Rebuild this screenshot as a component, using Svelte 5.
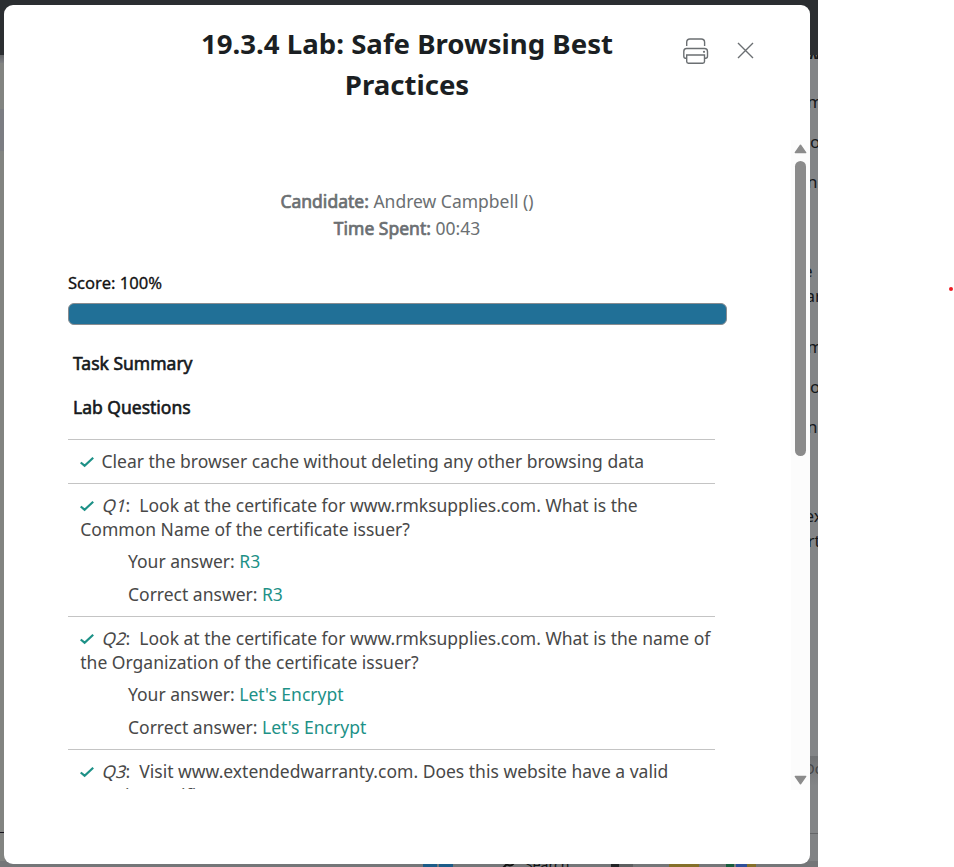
<script>
  // Clipped text of the page behind the dialog: row height and glyphs per row.
  const behind = [
    { h: 4, t: 'w.', x: -4, low: true },
    { h: 30, t: '', x: 0 },
    { h: 28, t: 'm', x: -3 },
    { h: 12, t: '', x: 0 },
    { h: 28, t: 'o', x: 0 },
    { h: 12, t: '', x: 0 },
    { h: 28, t: 'n', x: -3 },
    { h: 61, t: '', x: 0 },
    { h: 25, t: 'e', x: -7 },
    { h: 25, t: 'ar', x: -4.5 },
    { h: 26, t: '', x: 0 },
    { h: 28, t: 'm', x: -3 },
    { h: 12, t: '', x: 0 },
    { h: 28, t: 'o', x: 0 },
    { h: 12, t: '', x: 0 },
    { h: 28, t: 'n', x: -3 },
    { h: 61, t: '', x: 0 },
    { h: 25, t: 'ex', x: -5.5 },
    { h: 25, t: 'rt', x: -2.5 }
  ];

  const questions = [
    { q: 'Q1', text: 'Look at the certificate for www.rmksupplies.com. What is the Common Name of the certificate issuer?', answer: 'R3' },
    { q: 'Q2', text: "Look at the certificate for www.rmksupplies.com. What is the name of the Organization of the certificate issuer?", answer: "Let's Encrypt" },
    { q: 'Q3', text: 'Visit www.extendedwarranty.com. Does this website have a valid security certificate?' }
  ];
</script>

{#snippet check()}
  <svg class="check" width="14" height="12" viewBox="0 0 14 12" aria-hidden="true">
    <path d="M0.700 6.500 4.600 9.700 13.200 1.700" fill="none" stroke="#1d9187" stroke-width="2.200" />
  </svg>
{/snippet}

<div class="screen">
  <div class="page">
    <div class="topbar"></div>
    <div class="middle">
      <div class="left"><div class="shade"></div><div class="band"></div><div class="rule"></div></div>
      <div class="right">
        <div class="lines">
          {#each behind as row}
            <div class="frag" class:low={row.low} style="height:{row.h}px;text-indent:{row.x}px">{row.t}</div>
          {/each}
        </div>
        <div class="foot">Do</div>
        <div class="status"></div>
      </div>
    </div>
    <div class="taskbar">
      <span class="win"><i></i><i></i></span>
      <span class="find">
        <svg width="16" height="14" viewBox="0 0 16 14" aria-hidden="true"><circle cx="9" cy="5" r="4.400" fill="none" stroke="#111" stroke-width="2" /><path d="M6 8 2 12" stroke="#111" stroke-width="2" /></svg>
        <span class="findtext">Search</span>
      </span>
      <span class="app1"></span><span class="app2"></span><span class="app3"></span>
    </div>
  </div>

  <div class="dialog">
    <header>
      <h1>19.3.4 Lab: Safe Browsing Best Practices</h1>
      <div class="tools">
        <svg width="26" height="26" viewBox="0 0 26 26" fill="none" stroke="#6b6f72" stroke-width="1.4" aria-label="Print">
          <path d="M3.700 8V4.200Q3.700 1 6.900 1H18.200Q21.600 1 21.600 4.200V8" />
          <path d="M4 20.300H2.500Q0.800 20.300 0.800 18.300V13.500Q0.800 10.500 3.500 10.500H21.500Q24.500 10.500 24.500 13.500V18.300Q24.500 20.300 22.500 20.300H21.500" />
          <path d="M3.700 17H21.500V23.500Q21.500 25.200 19.800 25.200H5.400Q3.700 25.200 3.700 23.500Z" />
          <circle cx="21" cy="13.800" r="1.100" fill="#6b6f72" stroke="none" />
        </svg>
        <svg width="17" height="17" viewBox="0 0 17 17" fill="none" stroke="#6b6f72" stroke-width="1.4" aria-label="Close">
          <path d="M1 1 16 16M16 1 1 16" />
        </svg>
      </div>
    </header>
    <div class="scroller">
      <div class="content">
        <div class="meta">
          <div><b>Candidate:</b> Andrew Campbell ()</div>
          <div><b>Time Spent:</b> 00:43</div>
        </div>
        <div class="score">Score: 100%</div>
        <div class="meter"></div>
        <h2>Task Summary</h2>
        <h2>Lab Questions</h2>
        <ul>
          <li><p class="task">{@render check()}Clear the browser cache without deleting any other browsing data</p></li>
          {#each questions as item}
            <li>
              <p>{@render check()}<em>{item.q}</em>:&nbsp; {item.text}</p>
              {#if item.answer}
                <div class="answer">Your answer: <span>{item.answer}</span></div>
                <div class="answer">Correct answer: <span>{item.answer}</span></div>
              {/if}
            </li>
          {/each}
        </ul>
      </div>
      <div class="bar">
        <svg width="13" height="10" viewBox="0 0 13 10" aria-hidden="true"><path d="M6.500 1.200 11.700 8.600H1.300Z" fill="#8b8b8b" stroke="#8b8b8b" stroke-width="1.400" stroke-linejoin="round" /></svg>
        <div class="thumb"></div>
        <svg class="down" width="13" height="10" viewBox="0 0 13 10" aria-hidden="true"><path d="M6.500 8.800 11.700 1.400H1.300Z" fill="#8b8b8b" stroke="#8b8b8b" stroke-width="1.400" stroke-linejoin="round" /></svg>
      </div>
    </div>
  </div>
  <span class="dot"></span>
</div>

<style>
  :global(body) { margin: 0; background: #fff; }
  .screen { position: relative; width: 954px; height: 867px; overflow: hidden; font-family: 'Noto Sans', sans-serif; font-size: 17.5px; color: #484848; background: #fff; }
  .page { display: flex; flex-direction: column; width: 818px; height: 867px; overflow: hidden; background: #7d7f80; }
  .topbar { height: 55px; background: #2b2e31; flex: none; }
  .middle { display: flex; justify-content: space-between; height: 806px; flex: none; }
  .left { width: 5px; display: flex; flex-direction: column; background: #828481; }
  .shade { height: 8px; background: linear-gradient(#626466, #7d7f82); margin-bottom: 46px; }
  .band { height: 42px; background: #7b7d82; }
  .rule { margin-top: 681px; height: 1px; flex: none; background: #15131c; }
  .right { width: 8px; display: flex; flex-direction: column; overflow: hidden; background: #838587; }
  .lines { height: 701px; flex: none; overflow: hidden; }
  .frag { line-height: 25px; white-space: nowrap; color: #14171a; font-size: 17px; overflow: hidden; }
  .frag.low { line-height: 0; font-weight: 700; }
  .foot { height: 77px; flex: none; background: linear-gradient(#707274, #838587 30px); border-bottom: 1px solid #646668; font-size: 14px; line-height: 26px; text-indent: -5.500px; color: #434547; white-space: nowrap; }
  .status { flex: 1; background: #818385; }
  .taskbar { display: flex; align-items: flex-end; height: 6px; box-sizing: border-box; padding-left: 423px; flex: none; overflow: hidden; background: #747678; }
  .taskbar > span { height: 4px; flex: none; }
  .win { display: flex; gap: 2px; width: 30px; }
  .win i { flex: 1; background: #1c5c88; }
  .find { display: flex; width: 110px; margin-left: 48px; font-size: 14px; align-items: flex-start; }
  .find svg { margin-top: -7px; flex: none; }
  .findtext { margin-left: 8px; line-height: 14px; margin-top: -5px; color: #101214; }
  .app1 { width: 22px; background: linear-gradient(90deg, #222426 8px, #5d5f60 8px); }
  .app2 { width: 30px; margin-left: 36px; background: #84702a; }
  .app3 { width: 30px; margin-left: 27px; background: linear-gradient(90deg, #175d3d 8px, #7a7a7a 8px 10px, #2e4f99 10px 21px, #84702a 21px); }

  .dialog { position: absolute; left: 4px; top: 5px; width: 806px; height: 859px; background: #fff; border-radius: 9px; overflow: hidden; }
  header { display: flex; height: 135px; padding-left: 173px; }
  h1 { width: 460px; margin: 18px 0 0; text-align: center; font-size: 27.6px; line-height: 41px; font-weight: 700; color: #1b1f23; }
  .tools { display: flex; align-items: center; gap: 28px; height: 26px; margin: 32px 0 0 46px; }
  .tools svg:first-child { margin-top: 1px; }
  .scroller { display: flex; height: 650px; overflow: hidden; }
  .content { width: 787px; height: 649px; overflow: hidden; padding: 0 64px; box-sizing: border-box; flex: none; }
  .meta { width: 678px; padding-top: 48px; text-align: center; line-height: 27px; color: #6b6f72; }
  .meta b { font-weight: 400; -webkit-text-stroke: 0.7px currentColor; }
  .score { margin-top: 27px; line-height: 27px; color: #111; font-size: 16.6px; -webkit-text-stroke: 0.3px currentColor; }
  .meter { height: 22px; margin-top: 7px; box-sizing: border-box; border: 1px solid #888c90; border-radius: 6px; background: #217097; }
  h2 { margin: 0 0 0 5px; padding-top: 25px; font-size: 17.5px; line-height: 26px; font-weight: 400; -webkit-text-stroke: 0.6px currentColor; color: #15191c; }
  h2 + h2 { padding-top: 18px; }
  ul { list-style: none; margin: 19px 12px 0 0; padding: 0; }
  li { border-top: 1px solid #c4c4c4; padding: 9px 0 10.200px 12.300px; }
  p { margin: 0; line-height: 24px; }
  .check { margin-right: 9px; margin-left: -0.300px; vertical-align: 0; }
  .task .check { margin-right: 7.500px; }
  em { display: inline-block; font-style: normal; transform: skewX(-14deg); margin-right: -1.200px; }
  .answer { margin: 8.300px 0 0 47.700px; line-height: 24px; }
  .answer span { color: #1d9187; }
  .bar { width: 19px; background: #fcfcfc; display: flex; flex-direction: column; align-items: center; padding-top: 4px; box-sizing: border-box; }
  .bar svg { flex: none; }
  .thumb { width: 11px; height: 295px; margin-top: 7px; border-radius: 6px; background: #8b8b8b; flex: none; }
  .down { margin-top: auto; margin-bottom: 5px; }
  .dot { position: absolute; left: 949px; top: 287px; width: 4px; height: 4px; border-radius: 50%; background: #ed1c24; }
</style>
